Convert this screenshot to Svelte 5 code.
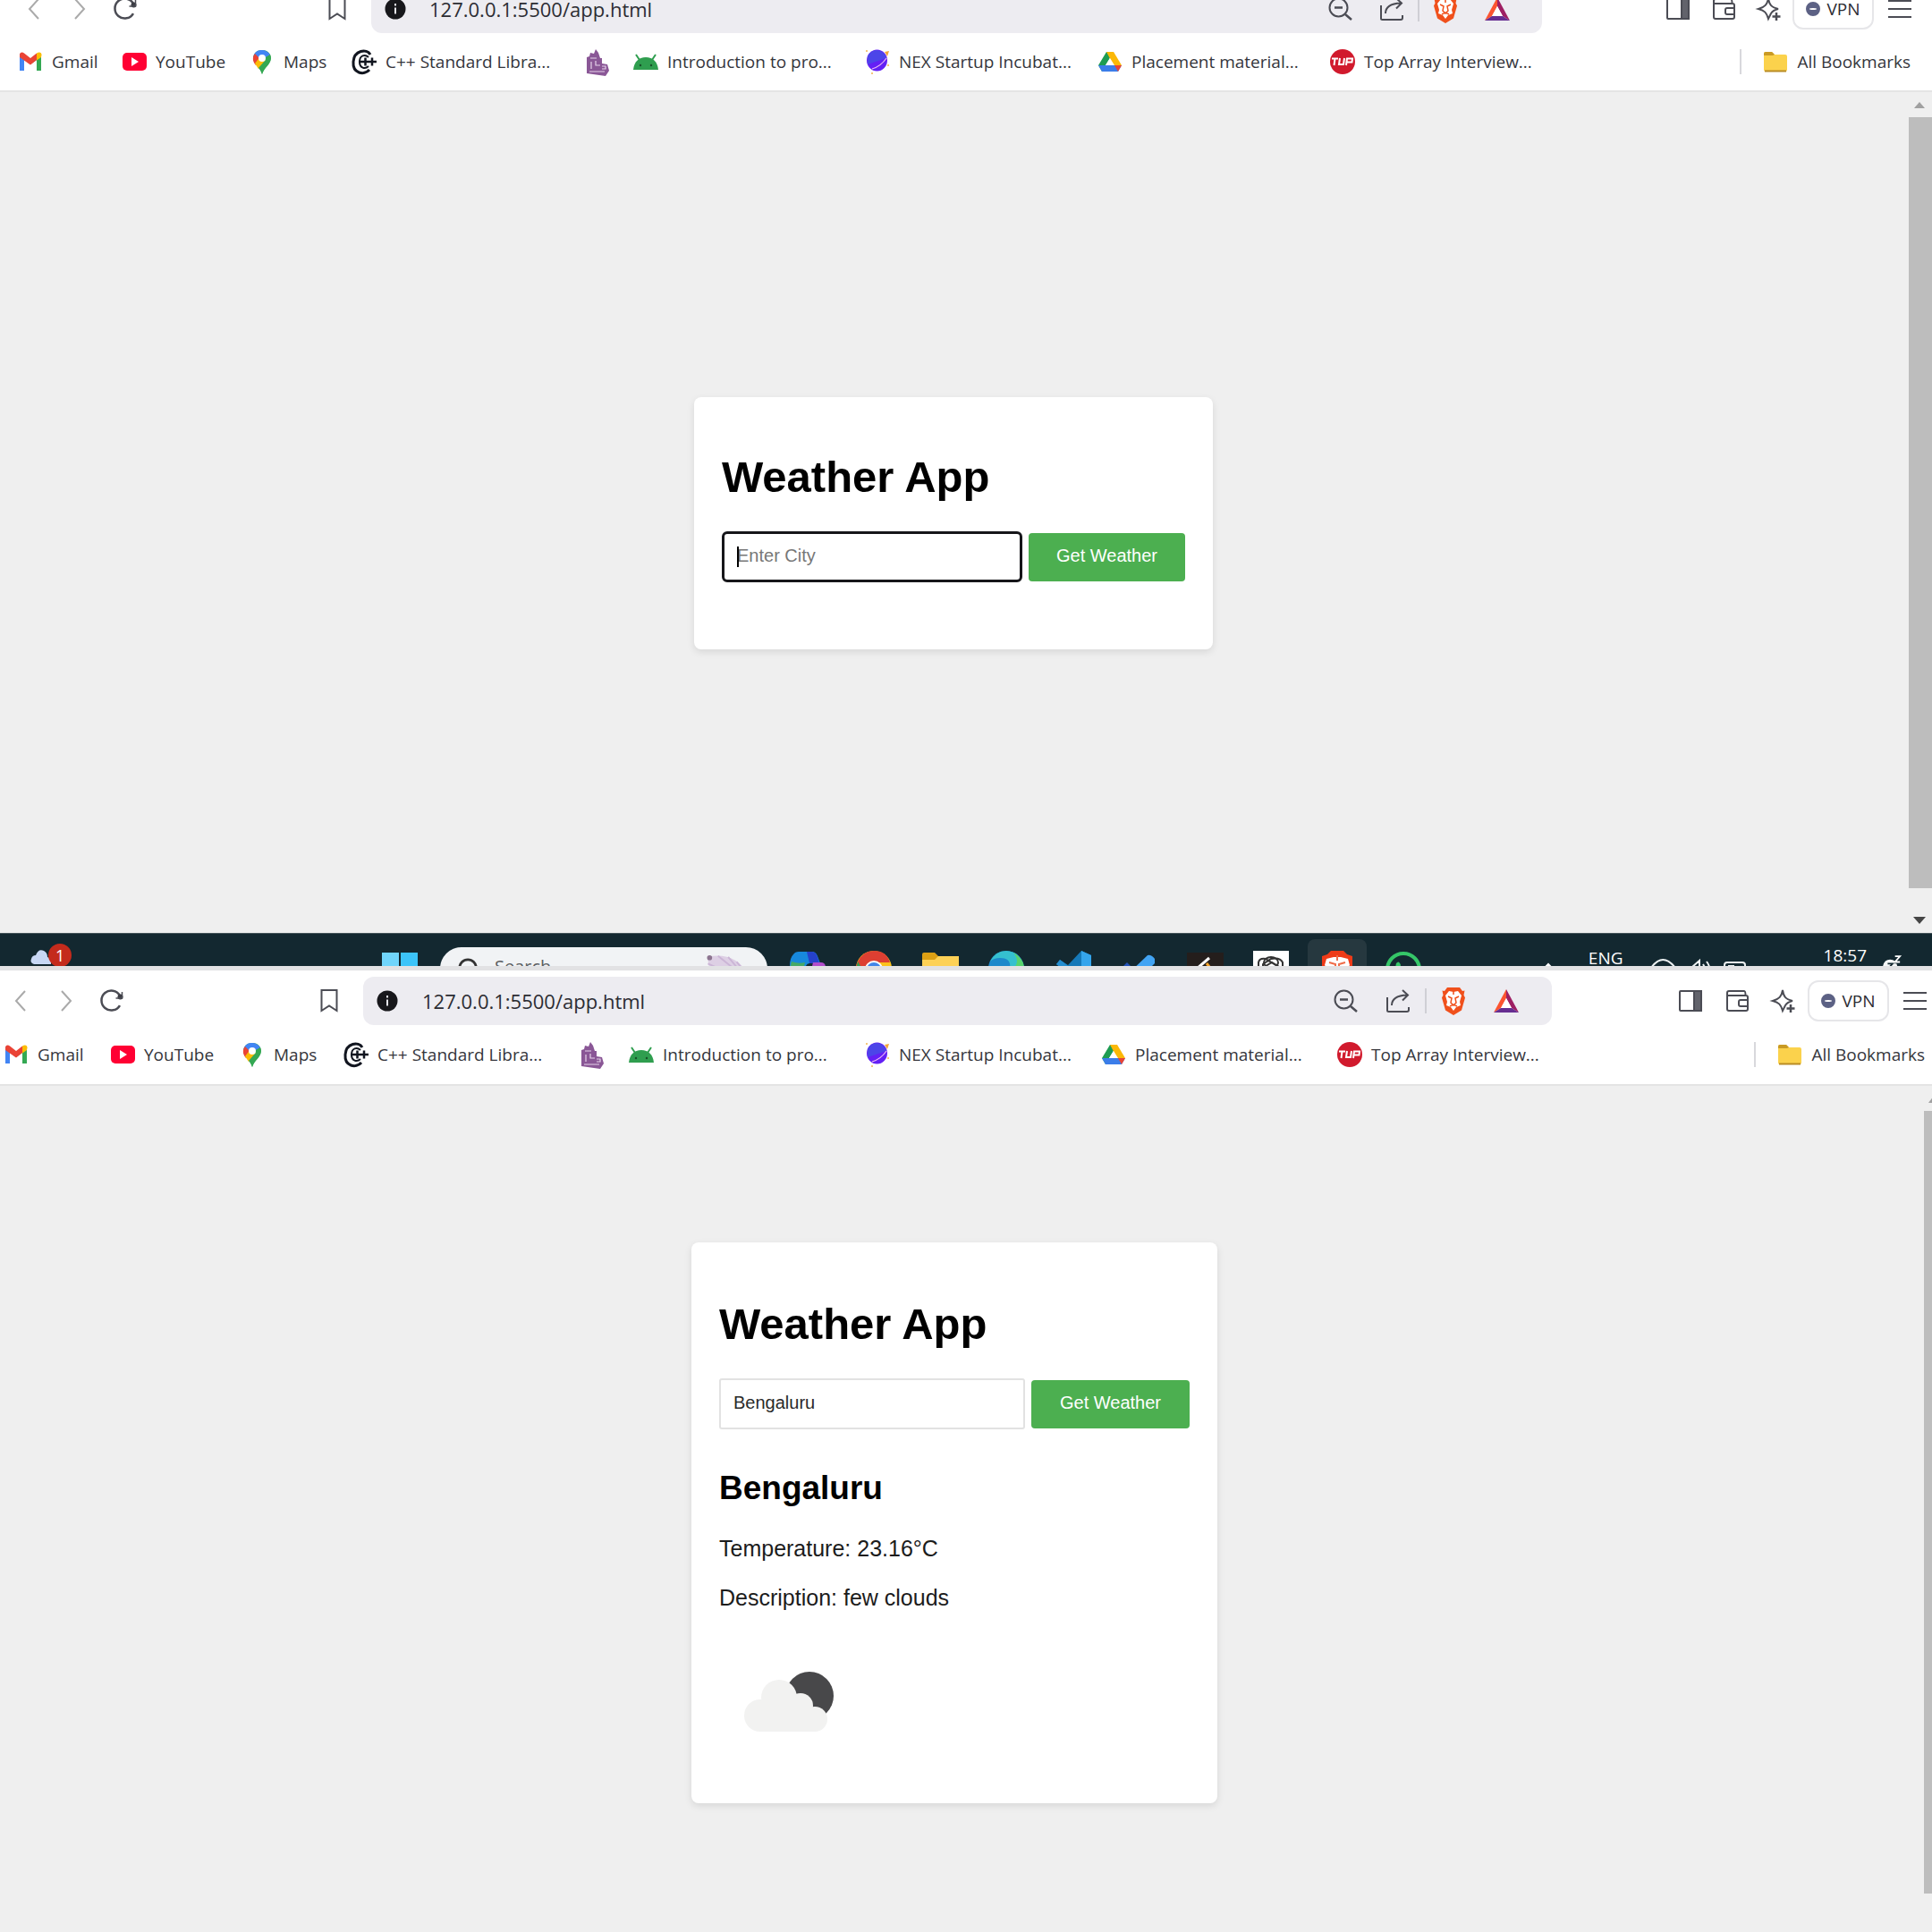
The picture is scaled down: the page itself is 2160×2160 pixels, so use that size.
<script>
  const bookmarks = [
    { icon: 'gmail', label: 'Gmail' },
    { icon: 'youtube', label: 'YouTube' },
    { icon: 'maps', label: 'Maps' },
    { icon: 'cpp', label: 'C++ Standard Libra...' },
    { icon: 'castle', label: '' },
    { icon: 'android', label: 'Introduction to pro...' },
    { icon: 'nex', label: 'NEX Startup Incubat...' },
    { icon: 'drive', label: 'Placement material...' },
    { icon: 'tup', label: 'Top Array Interview...' }
  ];
  const apps = ['copilot', 'chrome', 'explorer', 'edge', 'vscode', 'todo', 'leet', 'openai', 'lion', 'whatsapp'];
  const address = '127.0.0.1:5500/app.html';
  let firstCity = $state('');
  let secondCity = $state('Bengaluru');
</script>

{#snippet icon(name)}
  <svg class="icon" viewBox="0 0 28 28" fill="none" stroke="#4b4c54" stroke-width="2" aria-hidden="true">
    {#if name === 'back'}
      <path d="M19 3 9 14l10 11" stroke="#aaa" />
    {:else if name === 'forward'}
      <path d="m9 3 10 11L9 25" stroke="#aaa" />
    {:else if name === 'reload'}
      <path d="M23 19A11 11 0 1 1 23 8" stroke-width="2.500" /><circle cx="23.500" cy="9.500" r="3" fill="#3c3d44" stroke="none" /><path d="M18.500 11h7V4" stroke-width="1.500" />
    {:else if name === 'bookmark'}
      <path d="M5.500 2h17v23L14 19.500 5.500 25Z" />
    {:else if name === 'info'}
      <circle cx="14" cy="14" r="11.500" fill="#17171b" stroke="none" /><path d="M14 12.500v7M14 8v2.500" stroke="#e6e6ec" />
    {:else if name === 'zoom'}
      <circle cx="12.500" cy="12.500" r="10" /><path d="m20 20 7 6M8 12.500h9" stroke-width="2.500" />
    {:else if name === 'share'}
      <path d="M2 10v14.500q0 1.500 1.500 1.500H24q2 0 2-2v-3M7 19c0-7 5-11 17-11.500M19 2l6 5.500-6 6" />
    {:else if name === 'lion'}
      <path d="M7-1h14l3 4 2.500-.500-1 5 1.500 3-4 14L14 30 5 24.500 1 10.500l1.500-3-1-5L4 3Z" fill="#f0501c" stroke="none" />
      <path d="M14 4 9 3 5 8l2 7-1 4 5 2 3 4 3-4 5-2-1-4 2-7-4-5Z" fill="#fff" stroke="none" />
      <path d="m8 9 4 2-1 5 3 3 3-3-1-5 4-2M10 20l4-2 4 2M14 3v4" stroke="#f0501c" stroke-width="1.500" />
    {:else if name === 'bat'}
      <path d="M14 1 0 27l8-5 6-11Z" fill="#fc5430" stroke="none" /><path d="m14 1 14 26-8-5-6-11Z" fill="#9e1f63" stroke="none" /><path d="M0 27h28l-8-5H8Z" fill="#662d91" stroke="none" /><path d="M14 11 8 22h12Z" fill="#fff" stroke="none" />
    {:else if name === 'panel'}
      <rect x="2" y="3" width="24" height="22" rx="1" /><path d="M18 3h8v22h-8Z" fill="#62636b" />
    {:else if name === 'wallet'}
      <path d="M3 8h21q2 0 2 2v13q0 2-2 2H5q-2 0-2-2V5q0-2 2-2h17q1.500 0 1.500 5M3 8V5M26 13h-8q-2 0-2 2v3q0 2 2 2h8" />
    {:else if name === 'sparkle'}
      <path d="M13 2c1 7 3 10 11 12-4 1-6 2-8 5-1 2-2 4-3 6-2-7-4-9-11-11C9 12 12 9 13 2Z" /><path d="M22 18v9M17.500 22.500h9" stroke-width="2.500" />
    {:else if name === 'menu'}
      <path d="M1 5h26M1 14h26M1 23h26" />
    {:else if name === 'gmail'}
      <g stroke="none"><path d="M2 5v19h5V12l7 5V11Z" fill="#4285f4" /><path d="M26 5v19h-5V12l-7 5V11Z" fill="#34a853" /><path d="M2 7c0-4 3-4 5-2.500L14 10l7-5.500v7.500L14 17.500 2 9Z" fill="#ea4335" /><path d="M21 4.500c3-2 5.500-1 5.500 2L26 9l-5 3.500Z" fill="#fbbc04" /></g>
    {:else if name === 'youtube'}
      <rect x="1" y="4" width="27" height="20" rx="5" fill="#ff0033" stroke="none" /><path d="m11 9 8 5-8 5Z" fill="#fff" stroke="none" />
    {:else if name === 'maps'}
      <g stroke="none"><path d="M14 1C7 1 4 6 4 10c0 6 8 10 10 18 2-7 10-11 10-18 0-4-3-9-10-9Z" fill="#34a853" /><path d="M5 6c2-4 5-5 9-5 4 0 7 2 9 5L6 16C4 13 4 9 5 6Z" fill="#4285f4" /><path d="M6 5 12 11 7 18C3 13 3 9 6 5Z" fill="#ea4335" /><path d="m6 16 6-8 7 5-9 9Z" fill="#fbbc04" /><path d="M23 6c2 5 0 8-5 14-2 3-3 5-4 8-1-3-2-5-4-7L23 6Z" fill="#34a853" /><circle cx="14" cy="10" r="4" fill="#fff" /></g>
    {:else if name === 'cpp'}
      <path d="M21 6C17-1 3 1 2 14s12 16 18 9" stroke="#11151f" stroke-width="3" /><path d="M19 9c-4-4-10-2-10 5s6 9 10 5" stroke="#11151f" stroke-width="2" /><path d="M8 14h20M15.500 9.500v9M23 9.500v9" stroke="#11151f" stroke-width="2.500" />
    {:else if name === 'castle'}
      <path d="M2 27V9l3-1 1-4 4 1 2-5 3 4 2 6h2v6l6 1 2 7-4 6Z" fill="#8a5796" stroke="none" /><path d="M6 10h7M7 14v8M12 13v5h5M5 25h17M19 19h4v3h-4" stroke="#e6d3ea" stroke-width="1.200" />
    {:else if name === 'android'}
      <path d="M0 23C1 14 6 9 14 9s13 5 14 14Z" fill="#2f9e4f" stroke="none" /><path d="m7 12-4-6M21 12l4-6" stroke="#2f9e4f" /><circle cx="8" cy="18" r="1.200" fill="#174f28" stroke="none" /><circle cx="20" cy="18" r="1.200" fill="#174f28" stroke="none" />
    {:else if name === 'nex'}
      <ellipse cx="13.500" cy="12.500" rx="11.500" ry="12" fill="#6420f5" stroke="none" /><path d="M3 8a11 11 0 0 1 21 2L3 17Z" fill="#4c45e8" stroke="none" /><path d="M8 22q10-3 16-12" stroke="#eeb9f4" stroke-width="1.200" /><path d="m22 3 5-1-2 6Z" fill="#f3a73b" stroke="none" /><path d="M1 2h2M7 27h2M25 18h2" stroke="#f5c77b" />
    {:else if name === 'drive'}
      <g stroke="none"><path d="M10 3h8L9 18l-4 7-4-7Z" fill="#1e9c52" /><path d="M10 3h8l9 15h-9Z" fill="#fbb807" /><path d="M9 18h18l-4 7H5l-4-7Z" fill="#3b7de9" /><path d="M19 18h8l-4 7Z" fill="#e94335" /><path d="m14 10 5 8H9Z" fill="#fff" /></g>
    {:else if name === 'tup'}
      <circle cx="14" cy="14" r="14" fill="#d11a2d" stroke="none" /><path d="M2 10.500h7M5.500 10.500 4.500 18M11 10l-1 7h5l1-7M18 18l1-7.500h6l-.500 4h-6" stroke="#fff" stroke-width="2" />
    {:else if name === 'folder'}
      <path d="M1 23V5q0-2 2-2h7l3 3h12q2 0 2 2v15q0 2-2 2H3q-2 0-2-2Z" fill="#fbd24c" stroke="none" /><path d="M1 7V5q0-2 2-2h7l3 3-2 1Z" fill="#c99a24" stroke="none" /><path d="M2 24.500h24" stroke="#b98c25" />
    {/if}
  </svg>
{/snippet}

{#snippet app(name)}
  <svg class="app" viewBox="0 0 40 40" fill="none" aria-hidden="true">
    {#if name === 'windows'}
      <path d="M0 2h19v18H0ZM0 22h19v18H0Z" fill="#70d5fb" /><path d="M21 2h19v18H21ZM21 22h19v18H21Z" fill="#3cc4f9" />
    {:else if name === 'copilot'}
      <path d="M10 1h15q4 0 6 5l3 8H22q-4 0-6 8l-5 16H4Q-4 12 4 4q2-3 6-3Z" fill="#1788dc" /><path d="M2 12q8 3 15 1l-6 25H4Q-2 24 2 12Z" fill="#45a967" /><path d="M19 1h6q4 0 6 6l2 7H22Z" fill="#2541cb" /><path d="M26 13h9q6 0 5 9l-4 16H20Z" fill="#b14ccb" />
    {:else if name === 'chrome'}
      <circle cx="20" cy="20" r="20" fill="#fbc11a" /><path d="M2 12Q8 0 20 0q14 0 18 13H20L10 28 0 24Q-1 18 2 12Z" fill="#dd3f32" /><path d="M2 12 12 28 20 40Q-4 36 2 12Z" fill="#329c4d" /><circle cx="20" cy="21" r="10" fill="#fff" /><circle cx="20" cy="21" r="8" fill="#4285e8" />
    {:else if name === 'explorer'}
      <path d="M0 36V4q0-2 2-2h12l4 4h20q3 0 3 3v28Z" fill="#dda014" /><path d="M0 10h14l4-4h23v32H0Z" fill="#fdd156" />
    {:else if name === 'edge'}
      <circle cx="20" cy="20" r="20" fill="#1c88cb" /><path d="M2 12Q8 0 20 0q17 1 20 20H24Q26 8 13 8 6 8 2 12Z" fill="#35c0cf" /><path d="M28 2q12 7 12 18H28Q36 12 28 2Z" fill="#58d36c" />
    {:else if name === 'vscode'}
      <path d="m30 0 11 5v32H30L2 15l4-5 9 6Z" fill="#1679b8" /><path d="m30 0 11 5v32H30Z" fill="#35a5ec" /><path d="m2 15 4-5 24 18v8Z" fill="#248dcf" />
    {:else if name === 'todo'}
      <path d="m1 19 6-6 12 12-7 7Z" fill="#2352b9" /><path d="m9 25 21-20q4-1 8 4v5L16 36Z" fill="#42a4f3" />
    {:else if name === 'leet'}
      <path d="M0 2h41v38H0Z" fill="#241e1c" /><path d="M11 20 25 8" stroke="#fff" stroke-width="3" /><path d="m22 14 7 9" stroke="#f5a42a" stroke-width="3" />
    {:else if name === 'openai'}
      <path d="M0 0h40v40H0Z" fill="#fff" /><g stroke="#333" stroke-width="2"><ellipse cx="20" cy="13" rx="8" ry="6" /><path d="M6 22V13q1-5 8-4l13 8M11 28V15l9-6q10-2 13 4v8M14 22v-5l7-4 13 8" /></g>
    {:else if name === 'lion'}
      <path d="M9 4 13 0h14l4 4 6 2v12l-4 18H7L3 18V6Z" fill="#ef3b18" /><path d="m8 9 8-2h8l8 2 2 7-5 7H11l-5-7Z" fill="#fff" /><path d="m11 13 7 2v7M29 13l-7 2v7M20 5v6" stroke="#ef6b47" stroke-width="2" />
    {:else if name === 'whatsapp'}
      <circle cx="20" cy="21" r="18" stroke="#35c668" stroke-width="4" /><path d="M12 14q3-4 5 2l-2 7q-5-2-3-9Z" fill="#35c668" />
    {/if}
  </svg>
{/snippet}

{#snippet chrome()}
  <header class="chrome">
    <div class="toolbar">
      <nav class="nav" aria-label="History">
        <button aria-label="Back">{@render icon('back')}</button>
        <button aria-label="Forward">{@render icon('forward')}</button>
        <button aria-label="Reload">{@render icon('reload')}</button>
      </nav>
      <button class="save" aria-label="Bookmark this page">{@render icon('bookmark')}</button>
      <div class="address">
        <button aria-label="Site information">{@render icon('info')}</button>
        <input aria-label="Address" value={address} />
        <button aria-label="Zoom">{@render icon('zoom')}</button>
        <button aria-label="Share">{@render icon('share')}</button>
        <span class="rule"></span>
        <button aria-label="Shields">{@render icon('lion')}</button>
        <button aria-label="Rewards">{@render icon('bat')}</button>
      </div>
      <div class="tools">
        <button aria-label="Side panel">{@render icon('panel')}</button>
        <button aria-label="Wallet">{@render icon('wallet')}</button>
        <button aria-label="Assistant">{@render icon('sparkle')}</button>
      </div>
      <button class="vpn"><span class="minus"></span>VPN</button>
      <button aria-label="Menu">{@render icon('menu')}</button>
    </div>
    <div class="bookmarks">
      <nav class="links" aria-label="Bookmarks">
        {#each bookmarks as item}
          <a href="#{item.icon}" aria-label={item.label || 'Castle'}>{@render icon(item.icon)}{item.label}</a>
        {/each}
      </nav>
      <a class="all" href="#all">{@render icon('folder')}All Bookmarks</a>
    </div>
  </header>
{/snippet}

<div class="screens">
  <section class="window first">
    {@render chrome()}
    <div class="viewport">
      <main>
        <article class="card">
          <h1>Weather App</h1>
          <form onsubmit={(e) => e.preventDefault()}>
            <label class="city active"><input aria-label="City" placeholder="Enter City" bind:value={firstCity} /></label>
            <button>Get Weather</button>
          </form>
        </article>
      </main>
      <div class="scrollbar">
        <svg viewBox="0 0 26 28"><path d="m6 18 6-7 6 7Z" fill="#a0a0a0" /></svg>
        <span class="thumb"></span>
        <svg viewBox="0 0 26 28"><path d="m5 10 7 8 7-8Z" fill="#454545" /></svg>
      </div>
    </div>
    <footer class="taskbar">
      <div class="strip">
        <div class="widget">
          <svg viewBox="0 0 46 28" aria-hidden="true"><path d="M4 24q-5-2-3-6 1-4 5-4 3-8 9-5 4 2 4 7 5 1 4 8Z" fill="#c8d8f5" /><circle cx="33" cy="14" r="13" fill="#c42b1c" /></svg>
          <span class="count">1</span>
        </div>
        <button aria-label="Start">{@render app('windows')}</button>
        <div class="search">
          <svg class="lens" viewBox="0 0 28 28" fill="none" stroke="#333" stroke-width="3"><circle cx="13" cy="13" r="10" /><path d="m20 20 7 7" /></svg>
          <input aria-label="Search" value="Search" />
          <svg class="art" viewBox="0 0 56 36" fill="none"><path d="M2 4q18-4 32 4 12 6 16 24H10Q2 18 2 4Z" fill="#ddcfe4" /><path d="m2 12 18 8M14 3l20 16M26 4l20 24M36 10l10 12" stroke="#cbb5d6" stroke-width="2" /><circle cx="4" cy="5" r="3" fill="#8c748f" /></svg>
        </div>
        <div class="apps">
          {#each apps as name}
            <button aria-label={name} class:current={name === 'lion'}>{@render app(name)}</button>
          {/each}
        </div>
        <div class="tray">
          <svg class="up" viewBox="0 0 14 14" fill="none" stroke="#fff" stroke-width="2"><path d="m2 9 5-5 5 5" /></svg>
          <span>ENG</span>
          <svg class="status" viewBox="0 0 108 30" fill="none" stroke="#eef2f3" stroke-width="2"><path d="M1 12q13-18 27 0M6 17q8-11 17 0" /><path d="M42 11h5l8-7v22l-8-7h-5ZM59 8q4 6 0 13M63 5q7 9 0 20" /><rect x="83" y="6" width="23" height="16" rx="3" /><path d="M87 9h7v10h-7Z" fill="#eef2f3" stroke="none" /></svg>
          <span class="clock">18:57</span>
          <svg class="bell" viewBox="0 0 24 30" fill="none"><path d="M1 25q-2-19 9-19 11 0 9 19Z" fill="#f4f6f7" /><path d="M7 11h6l-6 7h6M16 3h6l-6 7h6" stroke="#132830" stroke-width="2" /><path d="M16 2h6l-6 7h6" stroke="#fff" stroke-width="2" /></svg>
        </div>
      </div>
    </footer>
  </section>

  <section class="window second">
    {@render chrome()}
    <div class="viewport">
      <main>
        <article class="card">
          <h1>Weather App</h1>
          <form onsubmit={(e) => e.preventDefault()}>
            <label class="city"><input aria-label="City" placeholder="Enter City" bind:value={secondCity} /></label>
            <button>Get Weather</button>
          </form>
          <h2>Bengaluru</h2>
          <p>Temperature: 23.16°C</p>
          <p>Description: few clouds</p>
          <svg class="sky" viewBox="0 0 150 150" role="img" aria-label="few clouds">
            <circle cx="101" cy="69" r="27" fill="#48484a" />
            <g fill="#f2f2f1">
              <circle cx="46" cy="91" r="18" />
              <circle cx="67" cy="71" r="20" />
              <circle cx="91" cy="80" r="14" />
              <circle cx="107" cy="95" r="14" />
              <path d="M46 76h30l10-8 16 14 4 12v15H46Z" />
            </g>
          </svg>
        </article>
      </main>
      <div class="scrollbar">
        <svg viewBox="0 0 26 28"><path d="m5 19 6-8 6 8Z" fill="#a0a0a0" /></svg>
        <span class="thumb"></span>
      </div>
    </div>
  </section>
</div>

<style>
  :global(body) {
    margin: 0;
  }
  .screens {
    display: grid;
    grid-template-rows: 1fr 1fr;
    height: 100vh;
    background: #efefef;
    font-family: "Open Sans", "Noto Sans", sans-serif;
  }
  button {
    border: 0;
    padding: 0;
    background: none;
    font-family: inherit;
    flex: none;
  }
  svg {
    display: block;
    flex: none;
    overflow: visible;
  }
  .window {
    display: flex;
    flex-direction: column;
    min-height: 0;
    overflow: hidden;
  }
  .chrome {
    flex: none;
    background: #fff;
    border-bottom: 2px solid #e4e4e4;
  }
  .second .chrome {
    border-top: 5px solid #e2e2e4;
  }
  .first .chrome {
    margin-top: -24px;
  }
  .icon {
    width: 28px;
    height: 28px;
  }
  .toolbar {
    display: flex;
    align-items: center;
    padding: 7px 22px 0 24px;
  }
  .second .toolbar {
    padding: 7px 5px 0 9px;
  }
  .nav,
  .tools {
    display: flex;
    gap: 23px;
  }
  .save {
    margin: 0 24px 0 209px;
  }
  .second .save {
    margin: 0 24px 0 215px;
  }
  .address {
    flex: 1;
    min-width: 0;
    display: flex;
    align-items: center;
    gap: 30px;
    height: 54px;
    box-sizing: border-box;
    padding: 0 36px 0 13px;
    border-radius: 12px;
    background: #edecf1;
  }
  .second .address {
    gap: 31px;
    padding-right: 37px;
  }
  .address input {
    flex: 1;
    min-width: 0;
    border: 0;
    padding: 0;
    margin-left: -6px;
    background: none;
    font: 22px "Open Sans", "Noto Sans", sans-serif;
    color: #2c2c33;
  }
  .rule {
    width: 2px;
    height: 28px;
    margin: 0 -15px;
    background: #cfcfd5;
  }
  .tools {
    margin: 0 12px 0 138px;
  }
  .second .tools {
    gap: 24px;
    margin: 0 13px 0 141px;
  }
  .vpn {
    display: flex;
    align-items: center;
    justify-content: center;
    gap: 7px;
    width: 91px;
    height: 46px;
    box-sizing: border-box;
    margin-right: 15px;
    border: 2px solid #e6e6e9;
    border-radius: 12px;
    font-size: 19px;
    line-height: 18px;
    color: #2c2c33;
  }
  .minus {
    width: 8px;
    height: 2px;
    border: solid #5c6184;
    border-width: 7px 4px;
    border-radius: 8px;
    background: #fff;
  }
  .bookmarks {
    display: flex;
    align-items: center;
    justify-content: space-between;
    height: 66px;
    padding: 0 24px 0 20px;
  }
  .first .bookmarks {
    height: 64px;
  }
  .second .bookmarks {
    padding: 0 8px 0 4px;
  }
  .links {
    display: grid;
    grid-template-columns: 116px 143px 114px 261px 54px 259px 260px 260px auto;
  }
  .second .links {
    grid-template-columns: 119px 145px 116px 264px 55px 264px 264px 264px auto;
  }
  .bookmarks a {
    display: flex;
    align-items: center;
    gap: 10px;
    font-size: 19px;
    line-height: 28px;
    white-space: nowrap;
    text-decoration: none;
    color: #35363c;
  }
  .bookmarks .all {
    padding-left: 24px;
    border-left: 2px solid #d8d8dc;
  }
  .viewport {
    flex: 1;
    min-height: 0;
    display: flex;
    font-family: "Liberation Sans", Arial, sans-serif;
  }
  main {
    flex: 1;
    display: flex;
    align-items: center;
    justify-content: center;
    padding: 24px 2px 0 0;
  }
  .second main {
    padding: 31px 17px 0 0;
  }
  .scrollbar {
    width: 26px;
    display: flex;
    flex-direction: column;
  }
  .second .scrollbar {
    width: 9px;
    padding-bottom: 43px;
    overflow: hidden;
  }
  .scrollbar svg {
    width: 26px;
    height: 28px;
  }
  .first .scrollbar svg:last-child {
    padding-top: 22px;
  }
  .thumb {
    flex: 1;
    background: #bdbdbd;
  }
  .card {
    box-sizing: border-box;
    width: 580px;
    padding: 30px 31px 75px;
    border-radius: 8px;
    background: #fff;
    box-shadow: 0 3px 8px rgba(0, 0, 0, 0.1);
  }
  .second .card {
    width: 588px;
    padding: 32px 31px 39px;
  }
  h1 {
    margin: 31px 0 33px;
    font-size: 49px;
    line-height: 56px;
    color: #000;
  }
  form {
    display: flex;
    align-items: center;
    gap: 7px;
  }
  .city {
    flex: 1;
    position: relative;
    display: flex;
    height: 57px;
    box-sizing: border-box;
    border: 2px solid #e2e2e2;
    border-radius: 3px;
  }
  .city.active {
    border: 3px solid #16161a;
    border-radius: 6px;
  }
  .city.active::before {
    content: "";
    position: absolute;
    left: 14px;
    top: 14px;
    width: 2px;
    height: 23px;
    background: #000;
  }
  .city input {
    flex: 1;
    min-width: 0;
    border: 0;
    outline: 0;
    padding: 0 14px 2px;
    background: none;
    font: 20px "Liberation Sans", Arial, sans-serif;
    color: #2a2a2a;
  }
  .city input::placeholder {
    color: #777;
  }
  form button {
    height: 54px;
    padding: 0 31px 2px;
    border-radius: 4px;
    background: #4caf50;
    font-size: 20px;
    color: #fff;
  }
  .second form button {
    padding: 0 32px 2px;
  }
  h2 {
    margin: 45px 0 32px;
    font-size: 37px;
    line-height: 42px;
    color: #000;
  }
  p {
    margin: 0 0 27px;
    font-size: 25px;
    line-height: 28px;
    color: #1c1c1c;
  }
  .sky {
    width: 150px;
    height: 150px;
  }
  .taskbar {
    flex: none;
    height: 36px;
    border-top: 1px solid #45545a;
    background: #132830;
  }
  .strip {
    display: flex;
    align-items: center;
    height: 78px;
    padding-right: 34px;
  }
  .widget {
    flex: 0 0 393px;
    align-self: flex-start;
    position: relative;
    padding: 10px 0 0 34px;
  }
  .widget svg {
    width: 46px;
    height: 28px;
  }
  .count {
    position: absolute;
    left: 62px;
    top: 12px;
    font-size: 18px;
    line-height: 24px;
    color: #fff;
  }
  .app {
    width: 40px;
    height: 40px;
  }
  .search {
    display: flex;
    align-items: center;
    width: 366px;
    height: 48px;
    box-sizing: border-box;
    margin: 0 25px;
    padding: 0 14px 0 19px;
    border-radius: 24px;
    background: #f1f3f5;
  }
  .lens {
    width: 26px;
    height: 26px;
  }
  .search input {
    flex: 1;
    min-width: 0;
    border: 0;
    padding: 0 0 5px 16px;
    background: none;
    font: 20px "Open Sans", sans-serif;
    color: #5c5f62;
  }
  .art {
    width: 56px;
    height: 34px;
  }
  .apps {
    display: flex;
    align-items: center;
    gap: 34px;
  }
  .current {
    padding: 13px;
    margin: 0 -13px;
    border-radius: 8px;
    background: #26383f;
  }
  .tray {
    display: flex;
    align-items: flex-start;
    align-self: flex-start;
    margin-left: auto;
    padding-top: 18px;
    font-size: 19px;
    line-height: 18px;
    color: #fff;
  }
  .tray .up {
    width: 14px;
    height: 14px;
    margin: 12px 38px 0 0;
  }
  .status {
    width: 108px;
    height: 30px;
    margin: 8px 86px 0 30px;
  }
  .clock {
    margin-top: -3px;
  }
  .bell {
    width: 22px;
    height: 28px;
    margin: 5px 0 0 17px;
  }
</style>
